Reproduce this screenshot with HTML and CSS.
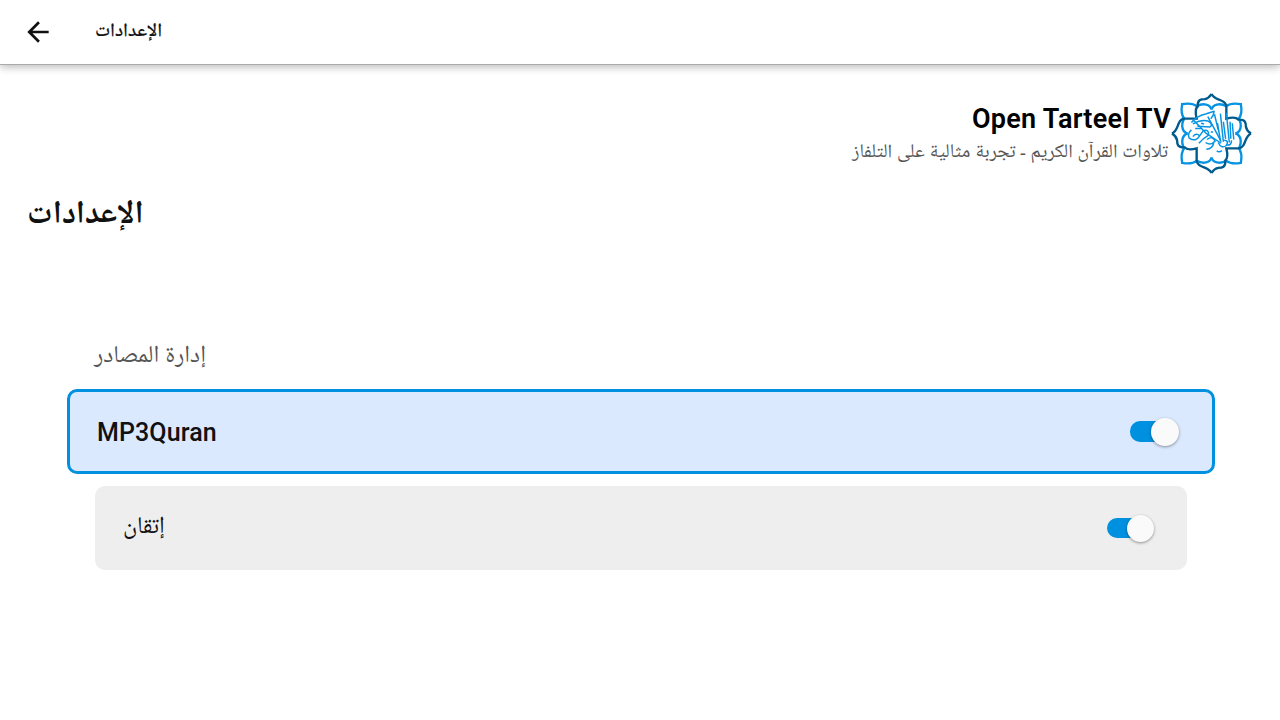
FILE: index.html
```html
<!DOCTYPE html>
<html lang="ar">
<head>
<meta charset="utf-8">
<title>Open Tarteel TV</title>
<link rel="stylesheet" href="styles.css">
</head>
<body>
<header class="topbar">
  <svg class="back" viewBox="0 0 24 24"><path d="M20 11H7.83l5.59-5.59L12 4l-8 8 8 8 1.41-1.41L7.83 13H20v-2z"/></svg>
  <span class="bar-title" dir="rtl">الإعدادات</span>
</header>
<main class="page">
  <section class="brand">
    <div class="brand-text">
      <div class="name">Open Tarteel TV</div>
      <div class="tagline" dir="rtl">تلاوات القرآن الكريم - تجربة مثالية على التلفاز</div>
    </div>
    <svg class="logo" viewBox="20 16 240 240" fill="none" stroke-width="7">
      <g id="quarter">
        <path stroke="#0693e3" d="M140 65C144 50 164 44 184 55C194 47 210 46 227 49C230 66 229 82 221 92C232 112 226 132 211 136"/>
        <path stroke="#005b8c" d="M140 19C147 33 160 34 170 39C180 43 184 49 184 58V92C200 88 214 88 220 95C240 94 242 104 242 116C244 128 251 132 257 136"/>
      </g>
      <use href="#quarter" transform="rotate(90 140 136)"/>
      <use href="#quarter" transform="rotate(180 140 136)"/>
      <use href="#quarter" transform="rotate(270 140 136)"/>
      <g stroke="#0693e3" stroke-width="4" stroke-linejoin="round" transform="translate(140 133) scale(1.1) translate(-140 -133)">
        <path d="M86 106Q100 88 124 83L147 76Q146 88 138 96M92 100L124 134L166 162M130 90L158 142L166 158M90 110Q112 98 130 102Q146 112 136 118L102 116"/>
        <path d="M86 126Q74 136 80 148Q98 160 108 142Q98 132 90 144M108 142L118 128Q134 124 132 140Q116 150 106 162M128 152Q142 140 150 156Q138 170 124 160M146 162Q142 178 126 178"/>
        <path d="M148 84L158 126M156 108L164 154M164 82L172 158M172 104L178 150M180 80L188 160M190 104L192 150M196 108L200 152M158 160Q166 178 180 168Q188 154 174 154M180 166Q194 170 194 154M154 182Q160 188 168 182M96 122H112M112 108L120 110M138 132H144"/>
      </g>
    </svg>
  </section>
  <h1 class="title" dir="rtl">الإعدادات</h1>
  <section class="sources">
    <h2 class="label" dir="rtl">إدارة المصادر</h2>
    <div class="row focused"><span class="source">MP3Quran</span><span class="switch"></span></div>
    <div class="row"><span class="arabic" dir="rtl">إتقان</span><span class="switch"></span></div>
  </section>
</main>
</body>
</html>
```
FILE: styles.css
```css
* { box-sizing: border-box; }
body { margin: 0; height: 720px; overflow: hidden; background: #fff; color: #111; font-family: Roboto, "Noto Naskh Arabic UI", "Noto Naskh Arabic", "Noto Sans Arabic", "DejaVu Sans", sans-serif; }
.topbar { height: 65px; display: flex; align-items: center; padding-left: 22px; border-bottom: 1px solid #aaa; box-shadow: 0 2px 8px rgba(0,0,0,.28); }
.back { width: 32px; height: 32px; fill: #111; }
.bar-title { margin-left: 41px; padding-bottom: 2px; font-size: 19.3px; font-weight: 500; -webkit-text-stroke: .2px #111; white-space: nowrap; }
.page { padding: 28px 28px 0; }
.brand { display: flex; justify-content: flex-end; height: 81px; }
.brand-text { text-align: right; padding-top: 9px; white-space: nowrap; }
.name { font-size: 27px; line-height: 34px; font-weight: 600; letter-spacing: .3px; margin-right: -1px; color: #000; }
.tagline { font-size: 19.35px; line-height: 36px; padding-right: 2px; color: #555; }
.logo { width: 81px; height: 81px; margin-left: 1px; }
.title { margin: 17px 0 0 -1px; height: 50px; line-height: 50px; font-size: 32px; font-weight: 700; text-align: left; }
.sources { padding: 100px 65px 0 67px; }
.label { margin: 0 0 0 -1px; height: 48px; line-height: 32px; font-size: 24.2px; font-weight: 400; color: #555; text-align: left; }
.row { height: 84px; display: flex; align-items: center; justify-content: space-between; padding: 0 33px 0 28px; border-radius: 10px; background: #eee; }
.focused { height: 85px; margin: 0 -28px 12px; border: 3px solid #0090e0; background: #dbe9ff; padding: 0 33px 0 27px; }
.source { font-size: 25px; font-weight: 500; letter-spacing: .1px; padding-top: 1px; }
.arabic { font-size: 24px; padding-bottom: 4px; }
.switch { width: 47px; height: 20px; display: flex; align-items: center; justify-content: flex-end; border-radius: 10px; background: linear-gradient(#0090e0, #0090e0) 0 0 / 30px 20px no-repeat; }
.switch::after { content: ""; width: 27px; height: 27px; flex: none; border-radius: 50%; background: #fafafa; box-shadow: 0 1px 3px rgba(0,0,0,.4); }
.focused .switch { width: 49px; height: 21px; background-size: 32px 21px; }
.focused .switch::after { width: 28px; height: 28px; }
```
